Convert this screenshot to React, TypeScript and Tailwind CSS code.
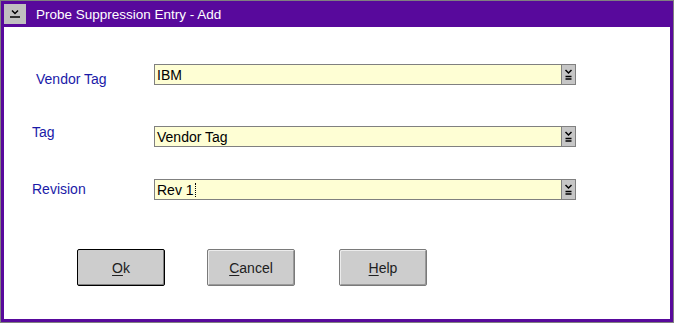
import React from "react";

const font = { fontFamily: '"Liberation Sans", Arial, sans-serif' };

const ArrowGlyph = () => (
  <svg width="9" height="12" viewBox="0 0 9 12" fill="none" stroke="#000" strokeWidth="1.5">
    <path d="M1.5 1 L4.5 4 L7.5 1" />
    <path d="M1.5 7.5 H7.5" />
    <path d="M1.5 10 H7.5" />
  </svg>
);

const Combo = ({ value, caret }: { value: string; caret?: boolean }) => (
  <div className="flex h-[21px] w-[422px] border border-[#808080] bg-[#fefed4]">
    <div className="flex flex-1 items-center pl-[2px] text-[14px] text-black">
      {value}
      {caret && <span className="ml-[1px] h-[14px] border-l border-dotted border-black" />}
    </div>
    <div className="flex w-[14px] items-center justify-center border-l border-[#808080] bg-[#c6c6c6]">
      <ArrowGlyph />
    </div>
  </div>
);

const Btn = ({ first, rest, isDefault }: { first: string; rest: string; isDefault?: boolean }) => (
  <button
    className={
      "flex h-[37px] w-[88px] items-center justify-center rounded-[2px] bg-[#cdcdcd] text-[14px] text-[#202020] " +
      (isDefault
        ? "border border-black shadow-[inset_-1px_-1px_0_#808080]"
        : "border border-[#7a7a7a] shadow-[inset_1px_1px_0_#ececec,inset_-1px_-1px_0_#9a9a9a]")
    }
  >
    <span className="underline underline-offset-2">{first}</span>
    {rest}
  </button>
);

export default function App() {
  return (
    <div style={font} className="h-[323px] w-[674px] bg-white">
      <div className="flex h-full w-full flex-col border border-[#808080] bg-[#58099c] px-[3px] pb-[3px]">
        {/* title bar */}
        <div className="flex h-[26px] items-start pt-[3px]">
          <div className="flex h-[20px] w-[22px] items-center justify-center bg-[#c0c0c0]">
            <svg width="12" height="10" viewBox="0 0 12 10" fill="none" stroke="#000" strokeWidth="1.5">
              <path d="M3 1.5 L6 4.5 L9 1.5" />
              <path d="M1 8 H11" />
            </svg>
          </div>
          <span className="ml-[10px] mt-[3px] text-[13.5px] leading-[15px] text-white">
            Probe Suppression Entry - Add
          </span>
        </div>

        {/* body */}
        <div className="flex-1 bg-white pl-[28px] pt-[37px] text-[14px] leading-[16px]">
          <div className="flex items-start">
            <div className="w-[122px] pl-[4px] pt-[7px] text-[#1a1aa8]">Vendor Tag</div>
            <Combo value="IBM" />
          </div>
          <div className="mt-[37px] flex items-start">
            <div className="w-[122px] text-[#1a1aa8]">Tag</div>
            <div className="mt-[2px]">
              <Combo value="Vendor Tag" />
            </div>
          </div>
          <div className="mt-[32px] flex items-start">
            <div className="w-[122px] pt-[2px] text-[#1a1aa8]">Revision</div>
            <Combo value="Rev 1" caret />
          </div>
          <div className="ml-[45px] mt-[49px] flex">
            <Btn first="O" rest="k" isDefault />
            <div className="ml-[42px]">
              <Btn first="C" rest="ancel" />
            </div>
            <div className="ml-[44px]">
              <Btn first="H" rest="elp" />
            </div>
          </div>
        </div>
      </div>
    </div>
  );
}
